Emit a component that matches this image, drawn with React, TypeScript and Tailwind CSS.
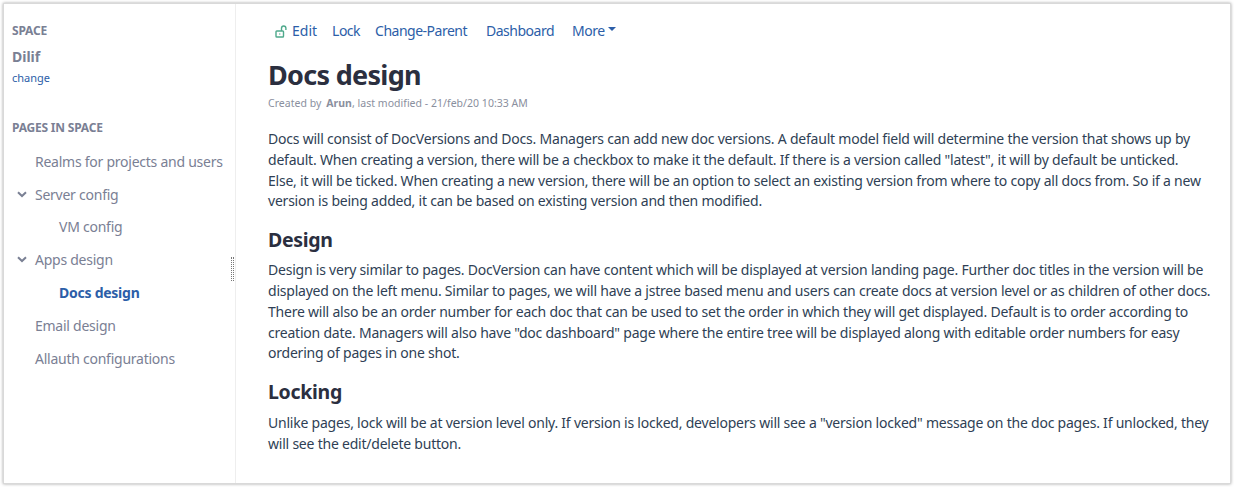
const paraOne = [
  "Docs will consist of DocVersions and Docs. Managers can add new doc versions. A default model field will determine the version that shows up by",
  "default. When creating a version, there will be a checkbox to make it the default. If there is a version called \"latest\", it will by default be unticked.",
  "Else, it will be ticked. When creating a new version, there will be an option to select an existing version from where to copy all docs from. So if a new",
  "version is being added, it can be based on existing version and then modified.",
]

const paraTwo = [
  "Design is very similar to pages. DocVersion can have content which will be displayed at version landing page. Further doc titles in the version will be",
  "displayed on the left menu. Similar to pages, we will have a jstree based menu and users can create docs at version level or as children of other docs.",
  "There will also be an order number for each doc that can be used to set the order in which they will get displayed. Default is to order according to",
  "creation date. Managers will also have \"doc dashboard\" page where the entire tree will be displayed along with editable order numbers for easy",
  "ordering of pages in one shot.",
]

const paraThree = [
  "Unlike pages, lock will be at version level only. If version is locked, developers will see a \"version locked\" message on the doc pages. If unlocked, they",
  "will see the edit/delete button.",
]

const Lines = ({ lines }: { lines: string[] }) => (
  <div className="text-[14px] leading-[20.8px] tracking-[-0.22px] text-[#2f3f55]">
    {lines.map((line) => (
      <p key={line} className="whitespace-nowrap">
        {line}
      </p>
    ))}
  </div>
)

const Chevron = () => (
  <svg width="10" height="7" viewBox="0 0 10 7" className="mr-[8px] ml-[-18px] shrink-0">
    <path d="M1 1.2 5 5l4-3.8" fill="none" stroke="#7a8094" strokeWidth="2" />
  </svg>
)

const TreeRow = ({ label, depth = 0, open = false, active = false }: { label: string; depth?: number; open?: boolean; active?: boolean }) => (
  <div
    className={`flex h-[32.8px] items-center whitespace-nowrap text-[14px] tracking-[-0.25px] ${depth ? "pl-[47px]" : "pl-[23px]"} ${
      active ? "font-bold text-[#2c5ea8]" : "text-[#7a8094]"
    }`}
  >
    {open && <Chevron />}
    {label}
  </div>
)

export default function App() {
  return (
    <div className="h-[487px] w-[1234px] bg-white p-[3px] font-['Noto_Sans',sans-serif]">
      <div className="flex h-[481px] border border-[#d9d9d9] shadow-[0_0_3px_rgba(0,0,0,0.35)]">
        {/* Sidebar */}
        <aside className="relative w-[232px] shrink-0 border-r border-[#eeeeee] pl-[8px] pt-[19px]">
          <h4 className="text-[12px] font-bold leading-[16px] tracking-[-0.2px] text-[#7a8094]">SPACE</h4>
          <div className="mt-[9px] text-[14px] font-bold leading-[18px] text-[#7a8094]">Dilif</div>
          <a className="mt-[4px] block text-[11px] leading-[15px] text-[#2c5ea8]">change</a>
          <h4 className="mt-[35px] text-[12px] font-bold leading-[16px] tracking-[-0.2px] text-[#7a8094]">PAGES IN SPACE</h4>
          <nav className="mt-[9px]">
            <TreeRow label="Realms for projects and users" />
            <TreeRow label="Server config" open />
            <TreeRow label="VM config" depth={1} />
            <TreeRow label="Apps design" open />
            <TreeRow label="Docs design" depth={1} active />
            <TreeRow label="Email design" />
            <TreeRow label="Allauth configurations" />
          </nav>
          {/* resize grip */}
          <div className="absolute right-[1px] top-[253px] h-[24px] w-[3px] border-x border-dotted border-[#777777]" />
        </aside>

        {/* Main Content */}
        <main className="min-w-0 flex-1 pl-[32px] pt-[15px]">
          <div className="flex h-[22px] items-center pl-[7px] text-[14px] tracking-[-0.5px] text-[#2c5ea8]">
            <svg width="13" height="13" viewBox="0 0 13 13" fill="none" stroke="#4fa98c" strokeWidth="1.4" className="mr-[4px] mt-[2px]">
              <rect x="1" y="6" width="7.5" height="6" rx="0.8" />
              <path d="M6.5 6V3.2a2.2 2.2 0 0 1 4.4 0V5" />
              <path d="M4.7 8.4v1.2" />
            </svg>
            <a className="tracking-normal">Edit</a>
            <a className="ml-[15px]">Lock</a>
            <a className="ml-[15px]">Change-Parent</a>
            <a className="ml-[19px]">Dashboard</a>
            <a className="ml-[18px] flex items-center">
              More
              <span className="ml-[3px] mt-[-2px] border-x-[4px] border-t-[4px] border-x-transparent border-t-[#2c5ea8]" />
            </a>
          </div>
          <h1 className="mt-[16px] text-[27px] font-bold leading-[36px] tracking-[-0.7px] text-[#2b2f3f]">Docs design</h1>
          <div className="mt-[3px] text-[10.5px] leading-[14px] tracking-[0.03px] text-[#8a8f9e]">
            Created by <b className="ml-[2px] font-bold">Arun</b>, last modified - 21/feb/20 10:33 AM
          </div>
          <div className="mt-[19px]">
            <Lines lines={paraOne} />
          </div>
          <h2 className="mt-[14px] text-[19.5px] font-bold leading-[28px] tracking-[-0.3px] text-[#2b2f3f]">Design</h2>
          <div className="mt-[6px]">
            <Lines lines={paraTwo} />
          </div>
          <h2 className="mt-[14px] text-[19.5px] font-bold leading-[28px] tracking-[-0.3px] text-[#2b2f3f]">Locking</h2>
          <div className="mt-[7px]">
            <Lines lines={paraThree} />
          </div>
        </main>
      </div>
    </div>
  )
}
